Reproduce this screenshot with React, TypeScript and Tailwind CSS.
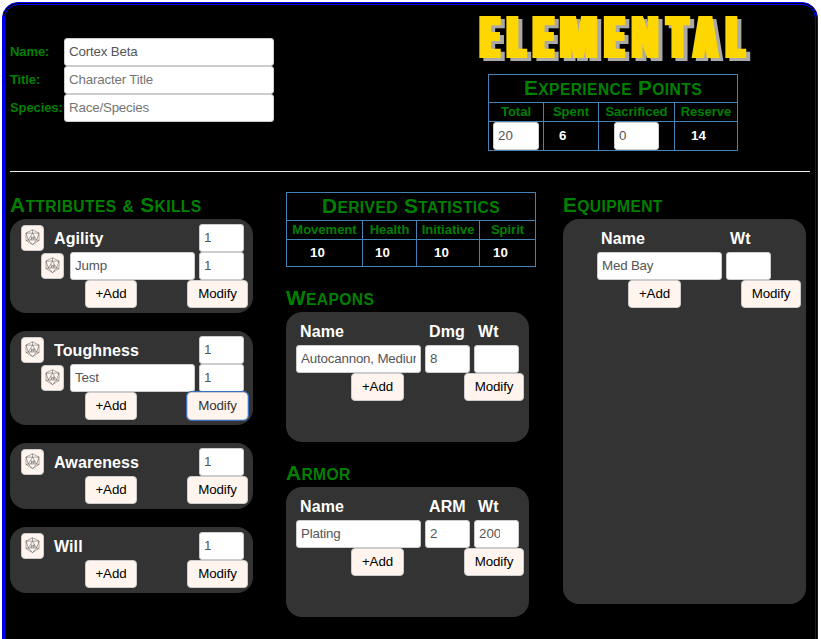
import React from 'react';

const input =
  'block h-[28px] shrink-0 rounded-[3px] border border-[#ccc] bg-white pl-[4px] pb-[2px] text-[13.33px] text-[#555] outline-none placeholder:text-[#757575]';
const textInput = `${input} pr-[4px] tracking-[-0.18px]`;
const numberInput = `${input} pr-[18px]`;
const button =
  'h-[28px] shrink-0 rounded-[4px] border border-[#ccc] bg-[#fff5ee] text-[13.33px] tracking-[-0.1px] whitespace-nowrap';

function Die() {
  return (
    <button className="flex h-[26px] w-[23px] shrink-0 justify-center rounded-[4px] border border-[#ccc] bg-[#fff5ee] pt-[3px]">
      <svg width="15" height="17" viewBox="0 0 15 17" fill="none" stroke="#555" strokeWidth="0.5">
        <path d="M7.5 0.8 14 4V11.6L7.5 15.6 1 11.6V4Z" />
        <path d="M7.5 4.2 11.6 11H3.4ZM7.5 0.8V4.2M1 4 7.5 4.2 14 4 11.6 11 14 11.6M1 4 3.4 11 1 11.6M3.4 11 7.5 15.6 11.6 11" />
        <path d="M5.8 8H7V9L5.8 10.2H7.1M8 8H9.2V10.2H8Z" strokeWidth="0.6" />
      </svg>
    </button>
  );
}

// Small capitals: every word is set in capitals with a taller first letter.
function SmallCaps({ text }: { text: string }) {
  return (
    <span className="flex items-baseline gap-[6px] text-[15.6px] leading-[24px] font-bold tracking-[0.4px] whitespace-nowrap text-[#008000] uppercase">
      {text.split(' ').map((word) => (
        <span key={word} className={word === '&' ? 'block' : 'block first-letter:text-[20.8px]'}>
          {word}
        </span>
      ))}
    </span>
  );
}

function Heading({ text }: { text: string }) {
  return (
    <h2 className="h-[27px] pt-px">
      <SmallCaps text={text} />
    </h2>
  );
}

function Attribute({ name, skill, focused }: { name: string; skill?: string; focused?: boolean }) {
  return (
    <section className="mb-[18px] w-[243px] rounded-[16px] bg-[#333] py-[5px]">
      <div className="flex h-[28px] items-center pl-[11px]">
        <Die />
        <span className="ml-[10px] w-[145px] pt-[2px] text-[16px] font-bold tracking-[0.1px] text-white">{name}</span>
        <input className={`${numberInput} w-[45px]`} defaultValue="1" />
      </div>
      {skill && (
        <div className="flex h-[28px] items-center pl-[31px]">
          <Die />
          <input className={`${textInput} ml-[6px] w-[125px]`} defaultValue={skill} />
          <input className={`${numberInput} ml-[4px] w-[45px]`} defaultValue="1" />
        </div>
      )}
      <div className="flex pl-[75px]">
        <button className={`${button} w-[52px] text-black`}>+Add</button>
        <button
          className={`${button} ml-[50px] w-[61px] ${focused ? 'outline outline-1 outline-[#3b6fc4] text-[#333]' : 'text-black'}`}
        >
          Modify
        </button>
      </div>
    </section>
  );
}

function GearButtons() {
  return (
    <div className="flex gap-[60px] pl-[65px]">
      <button className={`${button} w-[53px] text-black`}>+Add</button>
      <button className={`${button} w-[60px] text-black`}>Modify</button>
    </div>
  );
}

function Gear({ stat, name, value, weight }: { stat: string; name: string; value: string; weight: string }) {
  return (
    <section className="h-[130px] w-[243px] rounded-[16px] bg-[#333] pt-[5px]">
      <div className="flex h-[28px] items-center pt-[2px] pl-[14px] text-[16px] font-bold tracking-[0.1px] text-white">
        <span className="w-[129px]">Name</span>
        <span className="w-[49px]">{stat}</span>
        <span>Wt</span>
      </div>
      <div className="flex gap-[4px] pl-[10px]">
        <input className={`${textInput} w-[125px]`} defaultValue={name} />
        <input className={`${numberInput} w-[45px]`} defaultValue={value} />
        <input className={`${numberInput} w-[45px]`} defaultValue={weight} />
      </div>
      <GearButtons />
    </section>
  );
}

// Each letter with its left edge, advance width and the extra weight added on both sides.
const letters: [string, number, number, number][] = [
  ['E', 4, 18, 3],
  ['L', 31, 17, 3],
  ['E', 57, 19, 3],
  ['M', 83, 37, 2],
  ['E', 128.5, 18, 3],
  ['N', 155, 26, 2],
  ['T', 190, 21, 3],
  ['A', 217, 23, 3],
  ['L', 250, 17, 3],
];

function Heavy({ id, radius }: { id: string; radius: string }) {
  return (
    <filter id={id} x="-10" y="-10" width="300" height="80" filterUnits="userSpaceOnUse" colorInterpolationFilters="sRGB">
      <feMorphology in="SourceGraphic" operator="dilate" radius={radius} result="face" />
      <feFlood floodColor="#a9a9a9" />
      <feComposite in2="face" operator="in" />
      <feOffset dx="4" dy="3" result="shade" />
      <feMerge>
        <feMergeNode in="shade" />
        <feMergeNode in="face" />
      </feMerge>
    </filter>
  );
}

function Wordmark() {
  return (
    <svg className="block overflow-visible" width="276" height="60" viewBox="0 0 276 60" aria-label="Elemental">
      <defs>
        <Heavy id="heavy2" radius="2 0" />
        <Heavy id="heavy3" radius="3 0" />
      </defs>
      <g fill="#ffd700" fontSize="57.8" fontWeight="900" fontFamily="Inter, sans-serif">
        {letters.map(([ch, x, w, r], i) => (
          <text key={i} x={x} y="50" textLength={w} lengthAdjust="spacingAndGlyphs" filter={`url(#heavy${r})`}>
            {ch}
          </text>
        ))}
      </g>
    </svg>
  );
}

const title = 'col-span-4 flex items-center justify-center bg-black';
const th = 'flex items-center justify-center bg-black text-[13px] leading-[16px] font-bold text-[#008000]';
const td = 'flex items-center bg-black text-[13.33px] font-bold text-white';

export default function App() {
  return (
    <div className="h-[639px] w-[821px] overflow-hidden bg-white pt-[2px] pl-[2px] font-['Liberation_Sans',Arial,sans-serif]">
      <main className="h-[700px] w-[816px] rounded-[16px] border-[3px] border-double border-[#0000ff] bg-black pl-[5px]">
        <header className="flex h-[167px] w-[800px] border-b border-[#eee]">
          <div className="w-[467px] pt-[33px]">
            {[
              ['Name:', 'Cortex Beta', ''],
              ['Title:', '', 'Character Title'],
              ['Species:', '', 'Race/Species'],
            ].map(([label, value, hint]) => (
              <label key={label} className="flex h-[28px] items-center">
                <span className="w-[54px] text-[13px] font-bold tracking-[-0.1px] text-[#008000]">{label}</span>
                <input className={`${textInput} w-[210px]`} defaultValue={value} placeholder={hint} />
              </label>
            ))}
          </div>
          <div className="pt-[3px]">
            <Wordmark />
            <div className="mt-[6px] ml-[11px] grid w-[250px] grid-cols-[54px_54px_75px_62px] grid-rows-[27px_18px_28px] gap-px bg-[#4682b4] p-px">
              <div className={title}>
                <SmallCaps text="Experience Points" />
              </div>
              <div className={th}>Total</div>
              <div className={th}>Spent</div>
              <div className={th}>Sacrificed</div>
              <div className={th}>Reserve</div>
              <div className={`${td} pl-[4px]`}>
                <input className={`${numberInput} w-[46px] font-normal`} defaultValue="20" />
              </div>
              <div className={`${td} pl-[15px]`}>6</div>
              <div className={`${td} pl-[15px]`}>
                <input className={`${numberInput} w-[45px] font-normal`} defaultValue="0" />
              </div>
              <div className={`${td} pl-[16px]`}>14</div>
            </div>
          </div>
        </header>

        <div className="flex pt-[20px]">
          <div className="w-[276px]">
            <Heading text="Attributes & Skills" />
            <Attribute name="Agility" skill="Jump" />
            <Attribute name="Toughness" skill="Test" focused />
            <Attribute name="Awareness" />
            <Attribute name="Will" />
          </div>
          <div className="w-[277px]">
            <div className="mb-[18px] grid w-[250px] grid-cols-[75px_53px_62px_55px] grid-rows-[27px_18px_26px] gap-px bg-[#4682b4] p-px">
              <div className={title}>
                <SmallCaps text="Derived Statistics" />
              </div>
              <div className={th}>Movement</div>
              <div className={th}>Health</div>
              <div className={th}>Initiative</div>
              <div className={th}>Spirit</div>
              <div className={`${td} pl-[23px]`}>10</div>
              <div className={`${td} pl-[12px]`}>10</div>
              <div className={`${td} pl-[17px]`}>10</div>
              <div className={`${td} pl-[13px]`}>10</div>
            </div>
            <Heading text="Weapons" />
            <Gear stat="Dmg" name="Autocannon, Medium" value="8" weight="" />
            <div className="h-[18px]" />
            <Heading text="Armor" />
            <Gear stat="ARM" name="Plating" value="2" weight="200" />
          </div>
          <div>
            <Heading text="Equipment" />
            <section className="h-[385px] w-[243px] rounded-[16px] bg-[#333] pt-[5px]">
              <div className="flex h-[28px] items-center pt-[2px] pl-[38px] text-[16px] font-bold tracking-[0.1px] text-white">
                <span className="w-[129px]">Name</span>
                <span>Wt</span>
              </div>
              <div className="flex gap-[4px] pl-[34px]">
                <input className={`${textInput} w-[125px]`} defaultValue="Med Bay" />
                <input className={`${numberInput} w-[45px]`} />
              </div>
              <GearButtons />
            </section>
          </div>
        </div>
      </main>
    </div>
  );
}
